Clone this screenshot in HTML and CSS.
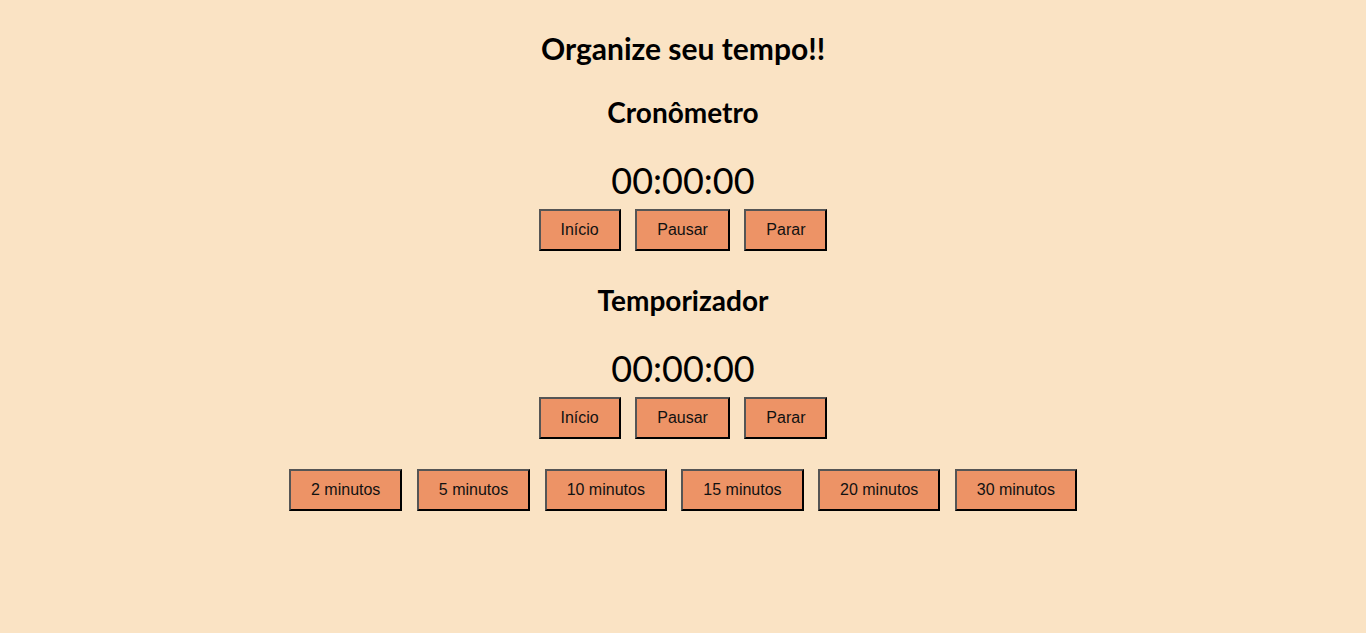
FILE: index.html
```html
<!DOCTYPE html>
<html lang="pt-BR">
<head>
<meta charset="utf-8">
<title>Organize seu tempo!!</title>
<link rel="stylesheet" href="styles.css">
</head>
<body>
<main class="page">
  <h1 class="title">Organize seu tempo!!</h1>

  <section class="block block-chrono">
    <h2 class="subtitle">Cronômetro</h2>
    <div class="display">00:00:00</div>
    <div class="controls">
      <button class="btn" type="button">Início</button>
      <button class="btn" type="button">Pausar</button>
      <button class="btn" type="button">Parar</button>
    </div>
  </section>

  <section class="block block-timer">
    <h2 class="subtitle">Temporizador</h2>
    <div class="display">00:00:00</div>
    <div class="controls">
      <button class="btn" type="button">Início</button>
      <button class="btn" type="button">Pausar</button>
      <button class="btn" type="button">Parar</button>
    </div>
    <div class="controls presets">
      <button class="btn" type="button">2 minutos</button>
      <button class="btn" type="button">5 minutos</button>
      <button class="btn" type="button">10 minutos</button>
      <button class="btn" type="button">15 minutos</button>
      <button class="btn" type="button">20 minutos</button>
      <button class="btn" type="button">30 minutos</button>
    </div>
  </section>
</main>
</body>
</html>
```

FILE: styles.css
```css
html, body {
  margin: 0;
  padding: 0;
}

body {
  background: #fae3c4;
  color: #000;
  font-family: "Lato", "Open Sans", sans-serif;
}

.page {
  display: flex;
  flex-direction: column;
  align-items: center;
  padding-top: 28px;
}

.title {
  margin: 0;
  font-size: 30px;
  line-height: 40px;
  font-weight: 700;
}

.block {
  display: flex;
  flex-direction: column;
  align-items: center;
}

.block-chrono {
  margin-top: 26px;
}

.block-timer {
  margin-top: 31px;
}

.subtitle {
  margin: 0;
  font-size: 28px;
  line-height: 36px;
  font-weight: 700;
}

.display {
  margin-top: 26px;
  font-size: 36px;
  line-height: 48px;
  font-weight: 400;
}

.controls {
  display: flex;
  justify-content: center;
  gap: 14.45px;
  margin-top: 5px;
}

.presets {
  margin-top: 30px;
}

.btn {
  margin: 0;
  padding: 10px 20px;
  font-family: "Liberation Sans", Arial, sans-serif;
  font-size: 16px;
  line-height: 18px;
  color: #111;
  background: #ed9366;
  border-style: solid;
  border-width: 2px;
  border-color: #555 #000 #000 #555;
  border-radius: 0;
  cursor: pointer;
}
```
